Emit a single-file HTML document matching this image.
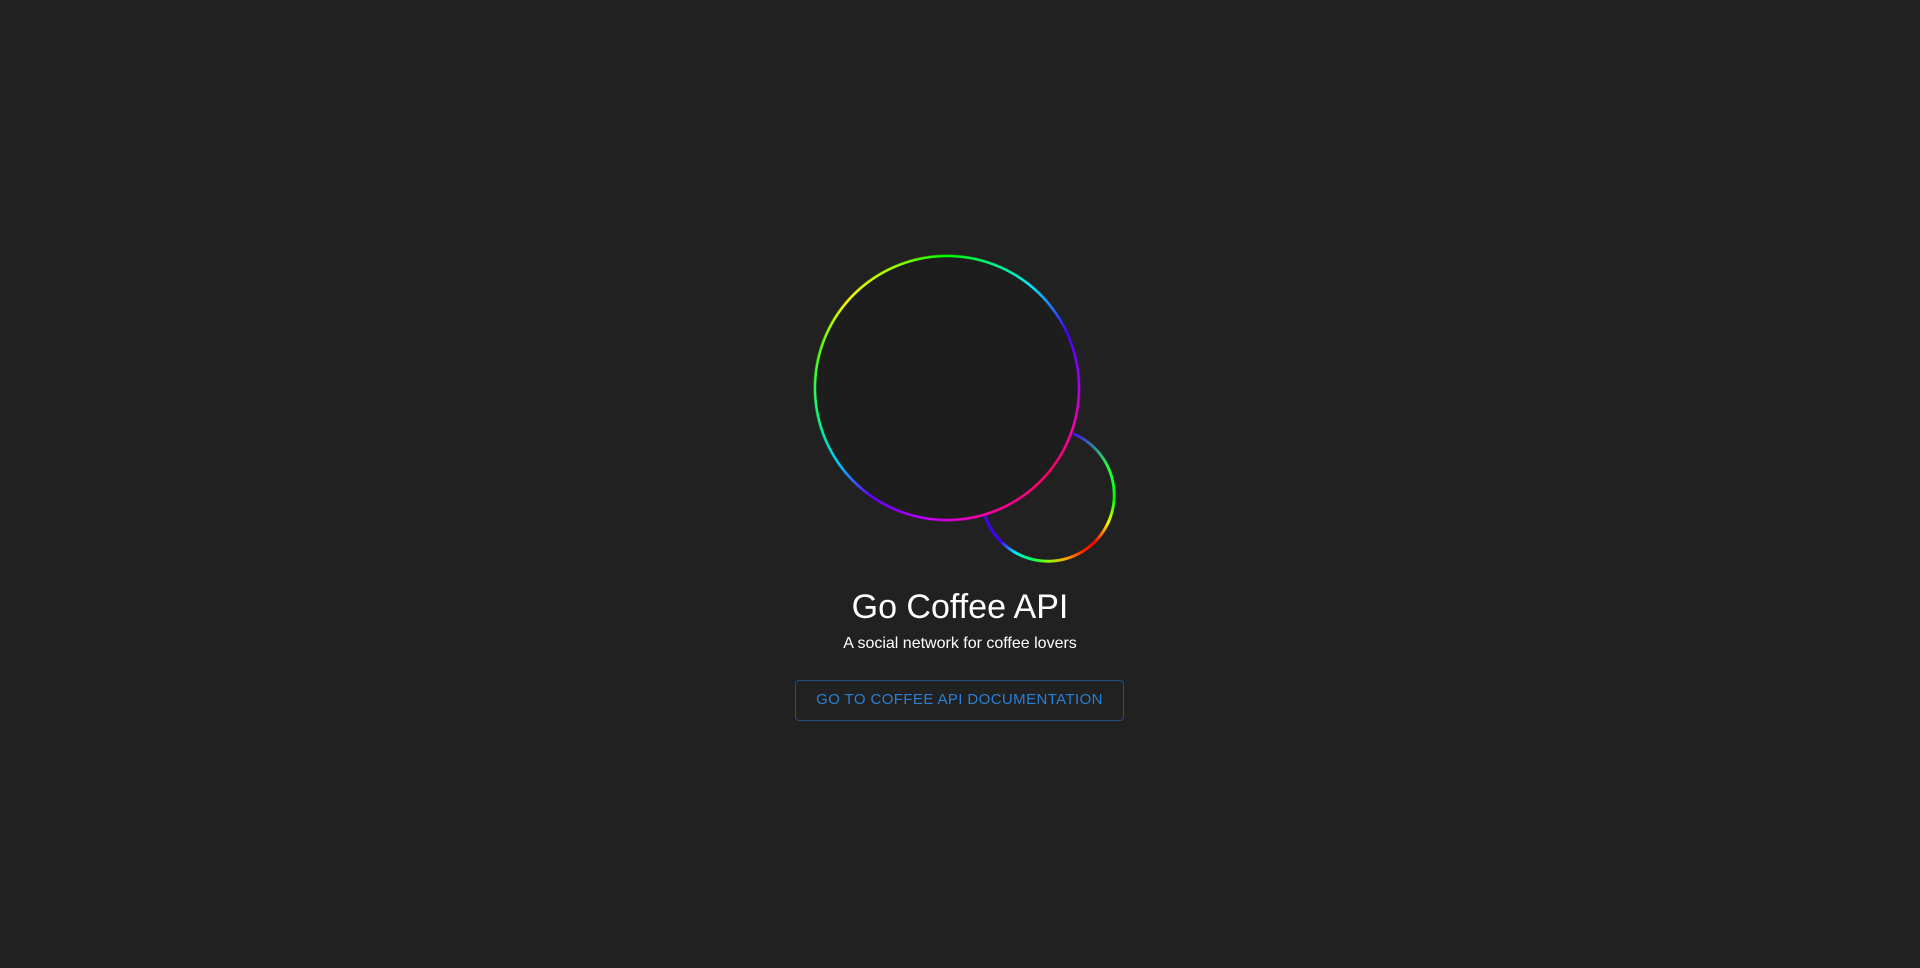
<!DOCTYPE html>
<html><head><meta charset="utf-8"><style>
html,body{margin:0;padding:0;background:#212121;width:1920px;height:968px;overflow:hidden;font-family:"Liberation Sans",Arial,sans-serif}
.ring{position:absolute;border-radius:50%;-webkit-mask:radial-gradient(circle closest-side,transparent calc(100% - 3.5px),#000 calc(100% - 3px),#000 99%,transparent 100%);mask:radial-gradient(circle closest-side,transparent calc(100% - 3.5px),#000 calc(100% - 3px),#000 99%,transparent 100%)}
.small{left:980px;top:427px;width:136px;height:136px;background:conic-gradient(from 0deg,#40f 0deg,#40f 20deg,#2f4 65deg,#0f0 95deg,#ff0 115deg,#f00 135deg,#f20 148deg,#fa0 165deg,#8f0 180deg,#0f6 195deg,#0ef 210deg,#40f 225deg,#40f 360deg)}
.fill{position:absolute;left:813px;top:254px;width:268px;height:268px;border-radius:50%;background:#1d1d1e}
.big{left:813px;top:254px;width:268px;height:268px;background:conic-gradient(from 0deg,#0f0 0deg,#0ef 40deg,#40f 65deg,#90f 85deg,#f0a 108deg,#f06 130deg,#f0a 165deg,#b0f 190deg,#60f 215deg,#0cf 235deg,#0f8 255deg,#6f0 290deg,#ff0 310deg,#af0 335deg,#0f0 360deg)}
h1{position:absolute;left:0;width:1920px;top:588px;margin:0;text-align:center;font-weight:400;font-size:34px;color:#fff}
p{position:absolute;left:0;width:1920px;top:635px;margin:0;text-align:center;font-size:16px;color:#fff}
.btn{position:absolute;left:795px;top:680px;width:327px;height:39px;border:1px solid rgba(33,118,210,.55);border-radius:4px;color:#2a7fd4;font-size:15px;letter-spacing:.4px;text-align:center;line-height:37px;box-sizing:content-box}
</style></head><body>
<div class="ring small"></div>
<div class="fill"></div>
<div class="ring big"></div>
<h1>Go Coffee API</h1>
<p>A social network for coffee lovers</p>
<div class="btn">GO TO COFFEE API DOCUMENTATION</div>
</body></html>
